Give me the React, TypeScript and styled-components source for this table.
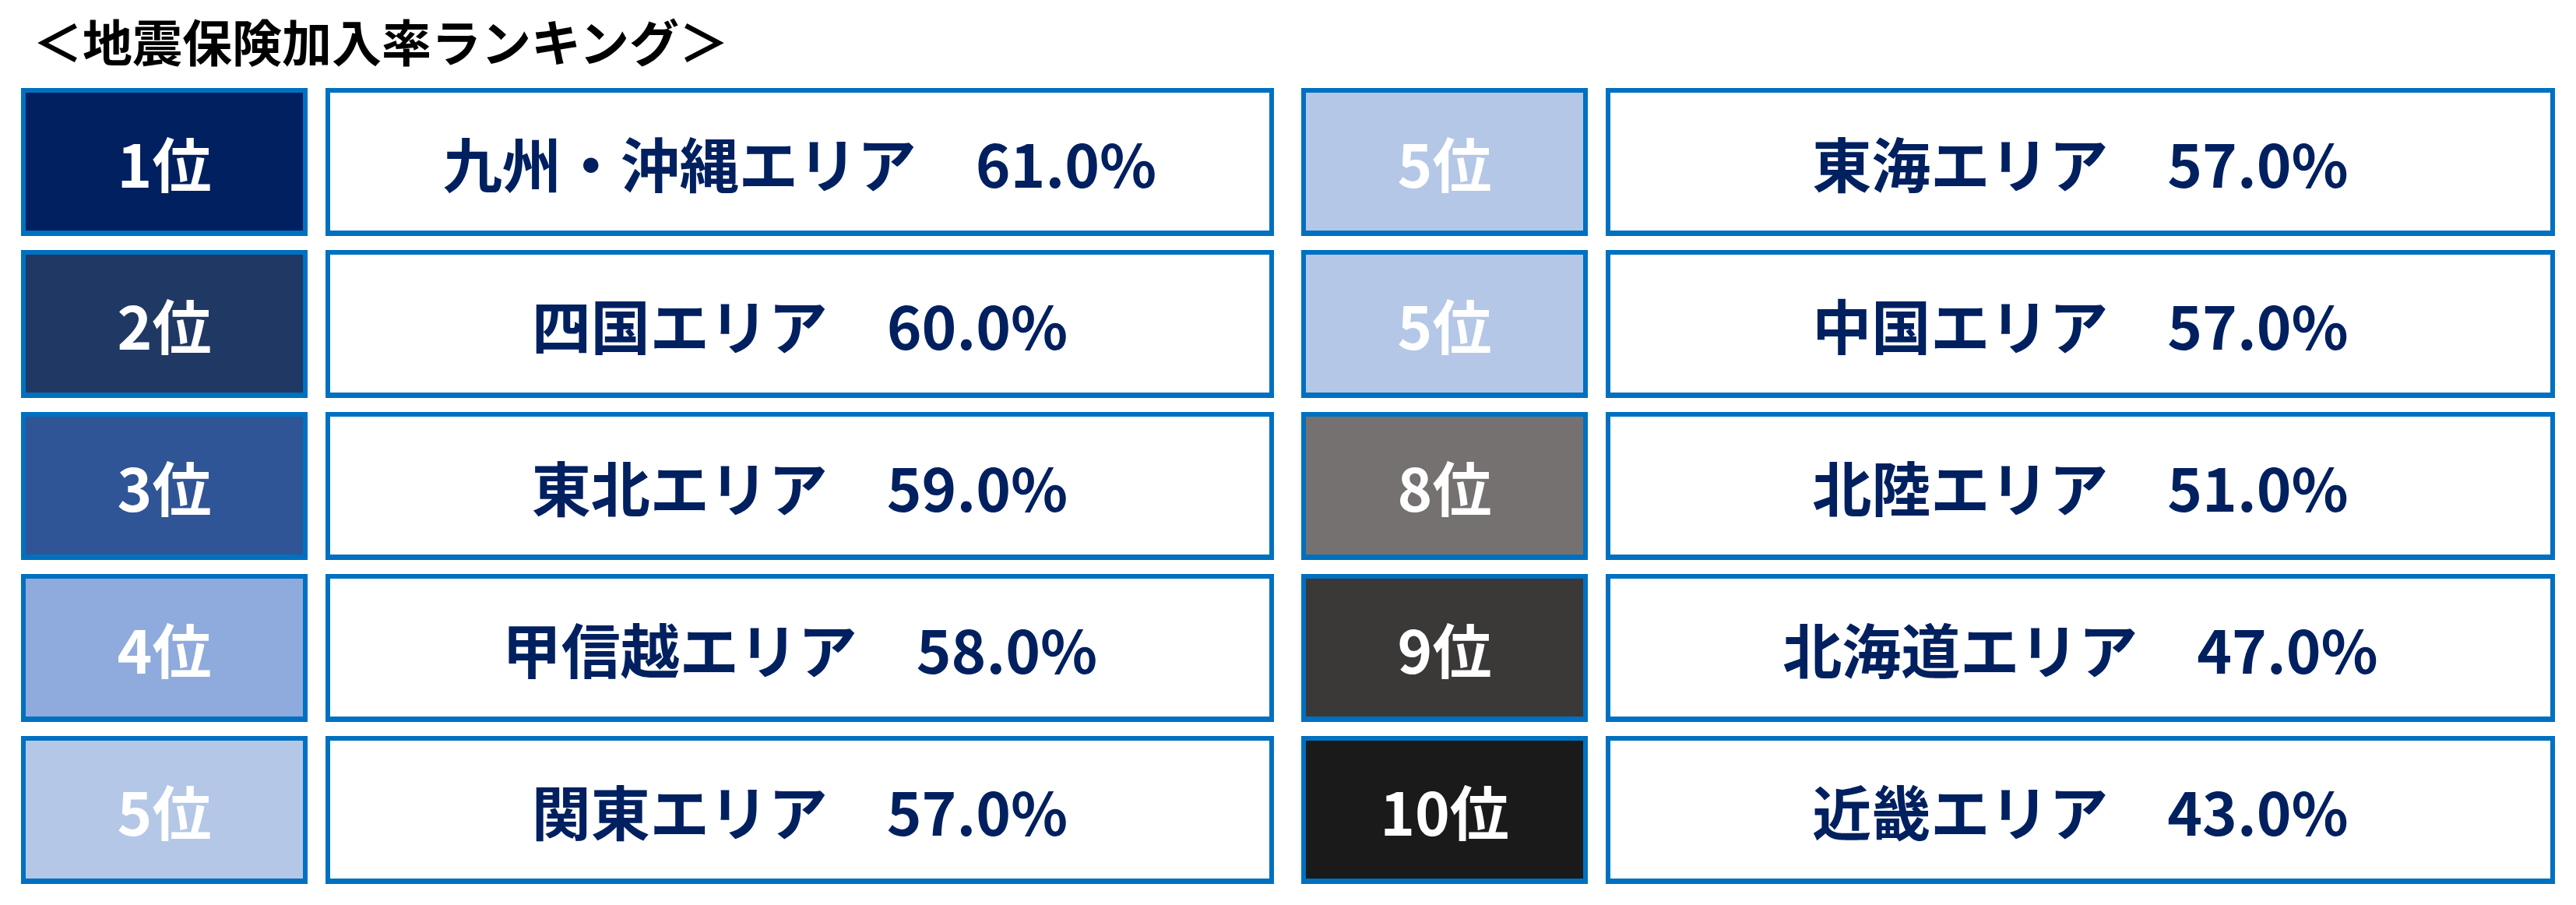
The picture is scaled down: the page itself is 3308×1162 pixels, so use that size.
import styled, { createGlobalStyle } from "styled-components"

const GlobalStyle = createGlobalStyle`
  html, body {
    margin: 0;
    padding: 0;
    background: #fff;
  }
  body {
    font-family: "Noto Sans CJK JP", "Noto Sans", sans-serif;
  }
`;

const Page = styled.main`
  width: 3308px;
  height: 1162px;
  box-sizing: border-box;
  padding: 19px 0 0 27px;
  background: #fff;
`;

const Title = styled.h1`
  margin: 0 0 30px 15px;
  font-size: 64px;
  line-height: 64px;
  font-weight: 700;
  color: #000;
  letter-spacing: 0;
`;

const Board = styled.div`
  display: grid;
  grid-template-columns: 1609px 1610px;
  column-gap: 35px;
`;

const Column = styled.div`
  display: flex;
  flex-direction: column;
  gap: 18px;
`;

const Row = styled.div`
  display: grid;
  grid-template-columns: 368px 1fr;
  column-gap: 23px;
  height: 190px;
`;

const Cell = styled.div`
  box-sizing: border-box;
  border: 6px solid #0070c0;
  border-bottom-width: 7px;
  display: flex;
  align-items: center;
  justify-content: center;
  font-size: 76px;
  font-weight: 700;
  white-space: pre;
`;

const Rank = styled(Cell)<{ $fill: string }>`
  background: ${(p) => p.$fill};
  color: #fff;
`;

const Value = styled(Cell)`
  background: #fff;
  color: #002060;
`;

type Item = { rank: string; fill: string; area: string; rate: string };

const left: Item[] = [
  { rank: "1位", fill: "#002060", area: "九州・沖縄エリア", rate: "61.0%" },
  { rank: "2位", fill: "#203864", area: "四国エリア", rate: "60.0%" },
  { rank: "3位", fill: "#2f5597", area: "東北エリア", rate: "59.0%" },
  { rank: "4位", fill: "#8faadc", area: "甲信越エリア", rate: "58.0%" },
  { rank: "5位", fill: "#b4c7e7", area: "関東エリア", rate: "57.0%" },
];

const right: Item[] = [
  { rank: "5位", fill: "#b4c7e7", area: "東海エリア", rate: "57.0%" },
  { rank: "5位", fill: "#b4c7e7", area: "中国エリア", rate: "57.0%" },
  { rank: "8位", fill: "#767171", area: "北陸エリア", rate: "51.0%" },
  { rank: "9位", fill: "#3b3838", area: "北海道エリア", rate: "47.0%" },
  { rank: "10位", fill: "#1a1a1a", area: "近畿エリア", rate: "43.0%" },
];

function RankColumn({ items }: { items: Item[] }) {
  return (
    <Column>
      {items.map((it) => (
        <Row key={it.area}>
          <Rank $fill={it.fill}>{it.rank}</Rank>
          <Value>{`${it.area}\u3000${it.rate}`}</Value>
        </Row>
      ))}
    </Column>
  );
}

export default function App() {
  return (
    <>
      <GlobalStyle />
      <Page>
        <Title>＜地震保険加入率ランキング＞</Title>
        <Board>
          <RankColumn items={left} />
          <RankColumn items={right} />
        </Board>
      </Page>
    </>
  );
}
